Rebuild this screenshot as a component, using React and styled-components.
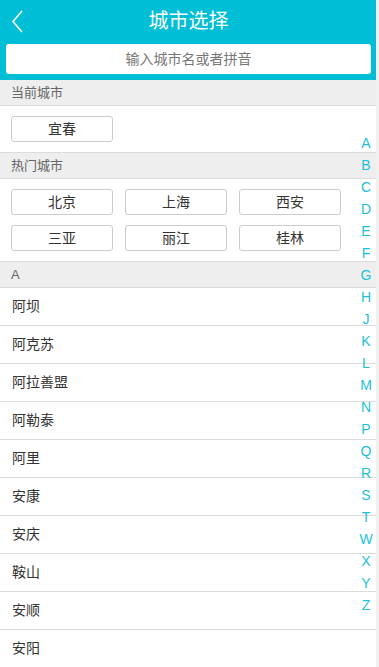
import React from "react";
import styled, { createGlobalStyle } from "styled-components";

const Global = createGlobalStyle`
  html, body {
    margin: 0;
    padding: 0;
    background: #f0f0f0;
    overflow: hidden;
  }
  * {
    box-sizing: border-box;
  }
`;

const Page = styled.div`
  position: relative;
  width: calc(100% - 3px);
  background: #fff;
  font-family: "Liberation Sans", "Noto Sans CJK SC", sans-serif;
  color: #333;
`;

const Header = styled.div`
  background: #00bed6;
  padding: 0 5px 6px 6px;
`;

const TitleBar = styled.div`
  position: relative;
  height: 42px;
  line-height: 42px;
  text-align: center;
  color: #fff;
  font-size: 20px;
`;

const Back = styled.svg`
  position: absolute;
  left: 4px;
  top: 9px;
`;

const Search = styled.input`
  display: block;
  width: 100%;
  height: 30px;
  margin-top: 2px;
  border: none;
  border-radius: 3px;
  background: #fff;
  text-align: center;
  font-family: inherit;
  font-size: 14px;
  color: #333;
  outline: none;
  &::placeholder {
    color: #777;
  }
`;

const SectionTitle = styled.div`
  height: 26px;
  line-height: 25px;
  padding-left: 11px;
  background: #eeeeee;
  border-bottom: 1px solid #dcdcdc;
  font-size: 13px;
  color: #666;
`;

const Block = styled.div`
  display: grid;
  grid-template-columns: repeat(3, 102px);
  column-gap: ${(p) => (p.wide ? "12px" : "11px")};
  row-gap: 10px;
  padding: 10px 11px;
  border-bottom: 1px solid #dcdcdc;
`;

const CityButton = styled.div`
  height: 26px;
  line-height: 24px;
  border: 1px solid #cccccc;
  border-radius: 3px;
  text-align: center;
  font-size: 14px;
  color: #333;
`;

const Row = styled.div`
  height: 38px;
  line-height: 37px;
  padding-left: 12px;
  border-bottom: 1px solid #dcdcdc;
  font-size: 14px;
  color: #333;
`;

const Index = styled.ul`
  position: absolute;
  right: 0;
  top: 132px;
  width: 20px;
  margin: 0;
  padding: 0;
  list-style: none;
`;

const Letter = styled.li`
  height: 22px;
  line-height: 22px;
  text-align: center;
  font-size: 14px;
  color: #1bc1da;
`;

const hot = ["北京", "上海", "西安", "三亚", "丽江", "桂林"];
const cities = ["阿坝", "阿克苏", "阿拉善盟", "阿勒泰", "阿里", "安康", "安庆", "鞍山", "安顺", "安阳", "澳门"];
const letters = "ABCDEFGHJKLMNPQRSTWXYZ".split("");

const App = () => {
  return (
    <Page>
      <Global />
      <Header>
        <TitleBar>
          <Back width="20" height="24" viewBox="0 0 20 24">
            <polyline points="12,2 3,12.5 12,23" fill="none" stroke="#fff" strokeWidth="1.6" />
          </Back>
          城市选择
        </TitleBar>
        <Search placeholder="输入城市名或者拼音" />
      </Header>
      <SectionTitle>当前城市</SectionTitle>
      <Block>
        <CityButton>宜春</CityButton>
      </Block>
      <SectionTitle>热门城市</SectionTitle>
      <Block wide>
        {hot.map((c) => (
          <CityButton key={c}>{c}</CityButton>
        ))}
      </Block>
      <SectionTitle>A</SectionTitle>
      {cities.map((c) => (
        <Row key={c}>{c}</Row>
      ))}
      <Index>
        {letters.map((l) => (
          <Letter key={l}>{l}</Letter>
        ))}
      </Index>
    </Page>
  );
};

export default App;
